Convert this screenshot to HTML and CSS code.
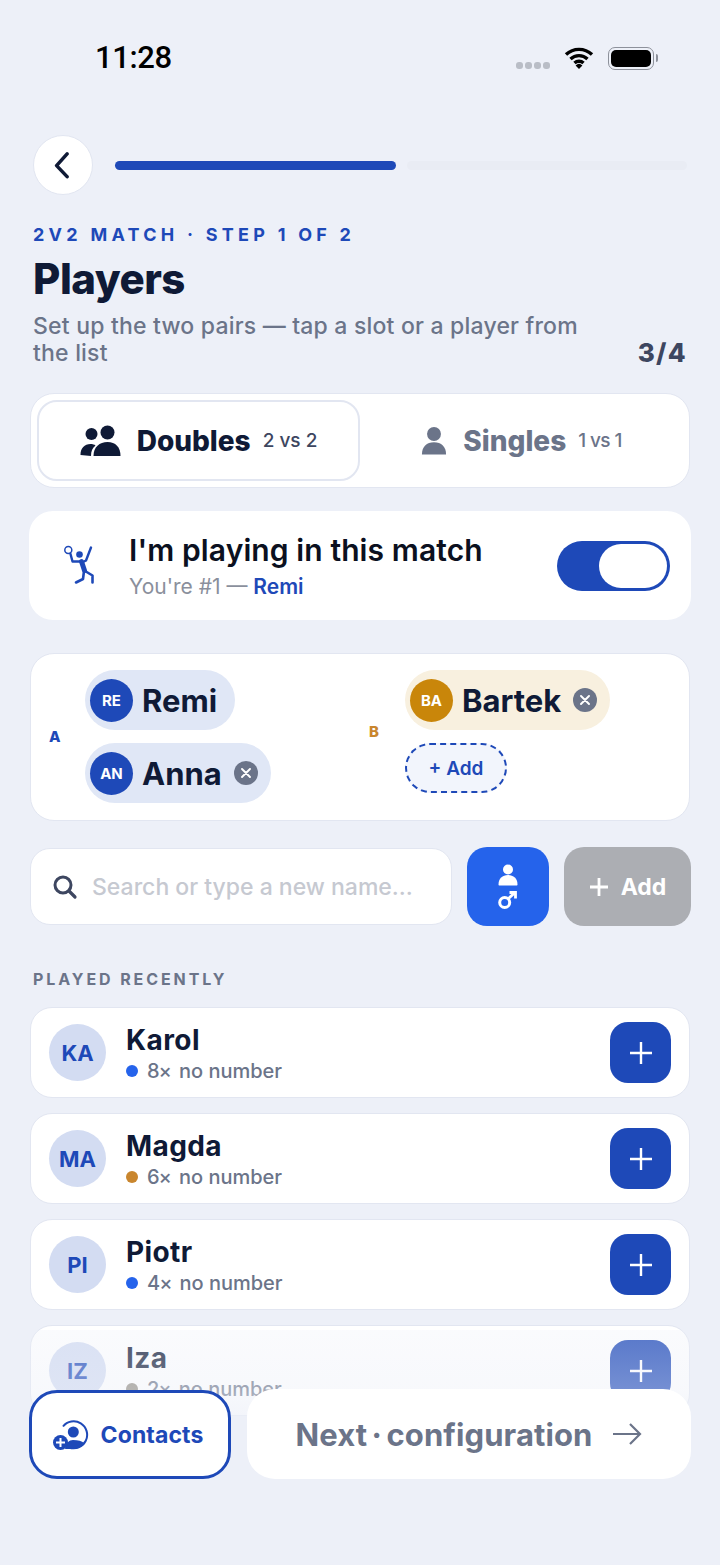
FILE: index.html
```html
<!DOCTYPE html>
<html lang="en">
<head>
    <meta charset="UTF-8">
    <meta name="viewport" content="width=device-width, initial-scale=1.0">
    <title>Players</title>
    <link rel="stylesheet" href="styles.css">
</head>
<body>
    <div class="screen">
        <!-- Status bar -->
        <div class="status-bar">
            <span class="clock">11:28</span>
            <div class="status-icons">
                <div class="signal"><i></i><i></i><i></i><i></i></div>
                <svg class="wifi" viewBox="0 0 30 24" width="30" height="24">
                    <path d="M2 8.500a19 19 0 0 1 26 0M6.500 13a12.500 12.500 0 0 1 17 0M10.500 17a6.500 6.500 0 0 1 9 0" fill="none" stroke="#000" stroke-width="3.400"/>
                    <path d="M15 23l-3.400-3.600a5 5 0 0 1 6.800 0z" fill="#000"/>
                </svg>
                <div class="battery"><div class="battery-level"></div></div>
            </div>
        </div>

        <!-- Back + progress -->
        <div class="topbar">
            <button class="back-btn">
                <svg viewBox="0 0 24 24" width="28" height="28"><path d="M15.500 2.500L6.500 12.500l9 9.500" fill="none" stroke="#0f1a36" stroke-width="3" stroke-linecap="round" stroke-linejoin="round"/></svg>
            </button>
            <div class="progress">
                <div class="progress-seg active"></div>
                <div class="progress-seg"></div>
            </div>
        </div>

        <div class="eyebrow">2V2 MATCH · STEP 1 OF 2</div>
        <h1>Players</h1>
        <div class="intro">
            <p>Set up the two pairs — tap a slot or a player from the list</p>
            <span class="count">3/4</span>
        </div>

        <!-- Match type -->
        <div class="segment">
            <div class="segment-item selected">
                <svg viewBox="0 0 40 32" width="41" height="32" fill="#0f1a36">
                    <circle cx="11" cy="9" r="6"/>
                    <circle cx="27" cy="7.500" r="7"/>
                    <path d="M0 30c0-7 4-11 10-11 2 0 4 .5 5 1.500-3 2.500-4.500 5.500-4.500 10.500z"/>
                    <path d="M13 31c0-9 6-14 14-14s13 5 13 14z"/>
                </svg>
                <span class="segment-label">Doubles</span>
                <span class="segment-hint">2 vs 2</span>
            </div>
            <div class="segment-item">
                <svg viewBox="0 0 28 30" width="26" height="29" fill="#6b7489">
                    <circle cx="14" cy="8" r="7.500"/>
                    <path d="M1 30c0-8 5-13 13-13s13 5 13 13z"/>
                </svg>
                <span class="segment-label">Singles</span>
                <span class="segment-hint">1 vs 1</span>
            </div>
        </div>

        <!-- Playing toggle -->
        <div class="me-card">
            <svg class="me-icon" viewBox="0 0 40 42" width="40" height="42">
                <circle cx="9.300" cy="5" r="3.500" fill="none" stroke="#1e49b8" stroke-width="1.500"/>
                <circle cx="20.500" cy="9.500" r="3.300" fill="#1e49b8"/>
                <g fill="none" stroke="#1e49b8" stroke-linecap="round" stroke-linejoin="round">
                    <path d="M11.500 9l2 7.500h9M32 2.500l-5 13-4 2" stroke-width="2.400"/>
                    <path d="M22.500 16.500l3 9" stroke-width="5"/>
                    <path d="M25 26l-1 8-7 3.500M26 26l7.500 4.500v7" stroke-width="2.600"/>
                </g>
            </svg>
            <div class="me-text">
                <div class="me-title">I'm playing in this match</div>
                <div class="me-sub">You're #1 — <span class="me-name">Remi</span></div>
            </div>
            <div class="toggle"><div class="toggle-knob"></div></div>
        </div>

        <!-- Teams -->
        <div class="teams">
            <div class="team">
                <span class="team-tag tag-a">A</span>
                <div class="team-slots">
                    <div class="chip chip-a">
                        <span class="chip-avatar">RE</span>
                        <span class="chip-name">Remi</span>
                    </div>
                    <div class="chip chip-a">
                        <span class="chip-avatar">AN</span>
                        <span class="chip-name">Anna</span>
                        <span class="chip-remove">
                            <svg viewBox="0 0 10 10" width="10" height="10"><path d="M1 1l8 8M9 1l-8 8" stroke="#fff" stroke-width="1.900" stroke-linecap="round"/></svg>
                        </span>
                    </div>
                </div>
            </div>
            <div class="team">
                <span class="team-tag tag-b">B</span>
                <div class="team-slots">
                    <div class="chip chip-b">
                        <span class="chip-avatar">BA</span>
                        <span class="chip-name">Bartek</span>
                        <span class="chip-remove">
                            <svg viewBox="0 0 10 10" width="10" height="10"><path d="M1 1l8 8M9 1l-8 8" stroke="#fff" stroke-width="1.900" stroke-linecap="round"/></svg>
                        </span>
                    </div>
                    <div class="slot-add">+ Add</div>
                </div>
            </div>
        </div>

        <!-- Search row -->
        <div class="search-row">
            <div class="search">
                <svg viewBox="0 0 26 26" width="26" height="26"><circle cx="11" cy="11" r="8" fill="none" stroke="#3d4660" stroke-width="3"/><path d="M17 17l6 6" stroke="#3d4660" stroke-width="3.200" stroke-linecap="round"/></svg>
                <span class="search-text">Search or type a new name...</span>
            </div>
            <button class="gender-btn">
                <svg viewBox="0 0 30 46" width="30" height="46" fill="#fff">
                    <circle cx="15" cy="5.500" r="5"/>
                    <path d="M5.500 20.500c0-6 4-9.500 9.500-9.500s9.500 3.500 9.500 9.500c0 .6-.4 1-1 1h-17c-.6 0-1-.4-1-1z"/>
                    <circle cx="11.700" cy="38.500" r="5" fill="none" stroke="#fff" stroke-width="3"/>
                    <path d="M15.500 34.500l6-5.500M16.500 28.500h6v6" fill="none" stroke="#fff" stroke-width="2.800"/>
                </svg>
            </button>
            <button class="add-btn">
                <svg viewBox="0 0 20 20" width="20" height="20"><path d="M10 1v18M1 10h18" stroke="#fff" stroke-width="2.800"/></svg>
                Add
            </button>
        </div>

        <div class="section-label">PLAYED RECENTLY</div>

        <div class="player-list">
            <div class="player">
                <span class="player-avatar">KA</span>
                <div class="player-info">
                    <div class="player-name">Karol</div>
                    <div class="player-meta"><i class="dot dot-blue"></i><span class="times">8×</span><span>no number</span></div>
                </div>
                <button class="plus-btn"><svg viewBox="0 0 24 24" width="24" height="24"><path d="M12 1v22M1 12h22" stroke="#fff" stroke-width="2.400"/></svg></button>
            </div>
            <div class="player">
                <span class="player-avatar">MA</span>
                <div class="player-info">
                    <div class="player-name">Magda</div>
                    <div class="player-meta"><i class="dot dot-amber"></i><span class="times">6×</span><span>no number</span></div>
                </div>
                <button class="plus-btn"><svg viewBox="0 0 24 24" width="24" height="24"><path d="M12 1v22M1 12h22" stroke="#fff" stroke-width="2.400"/></svg></button>
            </div>
            <div class="player">
                <span class="player-avatar">PI</span>
                <div class="player-info">
                    <div class="player-name">Piotr</div>
                    <div class="player-meta"><i class="dot dot-blue"></i><span class="times">4×</span><span>no number</span></div>
                </div>
                <button class="plus-btn"><svg viewBox="0 0 24 24" width="24" height="24"><path d="M12 1v22M1 12h22" stroke="#fff" stroke-width="2.400"/></svg></button>
            </div>
            <div class="player">
                <span class="player-avatar">IZ</span>
                <div class="player-info">
                    <div class="player-name">Iza</div>
                    <div class="player-meta"><i class="dot dot-grey"></i><span class="times">2×</span><span>no number</span></div>
                </div>
                <button class="plus-btn"><svg viewBox="0 0 24 24" width="24" height="24"><path d="M12 1v22M1 12h22" stroke="#fff" stroke-width="2.400"/></svg></button>
            </div>
        </div>

        <!-- Sticky footer over the list -->
        <div class="footer">
            <button class="contacts-btn">
                <svg viewBox="0 0 36 32" width="36" height="32">
                    <path d="M10 7.500A13.500 13.500 0 1 1 16 28.500" fill="none" stroke="#1e49b8" stroke-width="2"/>
                    <circle cx="20.300" cy="13" r="5.500" fill="#1e49b8"/>
                    <path d="M12 30c1-6 4-9 8-9 5 0 9 1 11 3-2 4-6 6-11 6z" fill="#1e49b8"/>
                    <circle cx="7.500" cy="23.500" r="7.500" fill="#1e49b8"/>
                    <path d="M7.500 19v9M3 23.500h9" stroke="#fff" stroke-width="2"/>
                </svg>
                Contacts
            </button>
            <button class="next-btn">
                Next · configuration
                <svg viewBox="0 0 30 24" width="30" height="24"><path d="M1 12h27M18 2l10 10-10 10" fill="none" stroke="#6b7489" stroke-width="2.200"/></svg>
            </button>
        </div>
    </div>
</body>
</html>
```
FILE: styles.css
```css
* {
    box-sizing: border-box;
}
body {
    margin: 0;
    font-family: Inter, "Liberation Sans", sans-serif;
    background-color: #edf0f8;
    color: #0f1a36;
}
button {
    font-family: inherit;
    border: none;
    cursor: pointer;
}
h1, p {
    margin: 0;
}
.screen {
    position: relative;
    width: 720px;
    height: 1565px;
    padding: 0 30px;
    overflow: hidden;
}

/* status bar */
.status-bar {
    height: 135px;
    padding: 39px 36px 0 65px;
    display: flex;
    justify-content: space-between;
    align-items: flex-start;
}
.clock {
    font-family: Roboto, sans-serif;
    font-size: 31px;
    line-height: 38px;
    font-weight: 500;
    letter-spacing: -0.4px;
    color: #000;
}
.status-icons {
    display: flex;
    align-items: center;
    gap: 14px;
    height: 38px;
}
.signal {
    display: flex;
    gap: 2px;
    margin-top: 14px;
}
.signal i {
    width: 7px;
    height: 7px;
    border-radius: 3px;
    background-color: #b9bdc6;
}
.battery {
    position: relative;
    width: 46px;
    height: 23px;
    padding: 2px;
    border: 1.5px solid #8d919b;
    border-radius: 7px;
}
.battery::after {
    content: "";
    position: absolute;
    right: -5px;
    top: 6px;
    width: 2px;
    height: 8px;
    border-radius: 0 2px 2px 0;
    background-color: #8d919b;
}
.battery-level {
    height: 100%;
    background-color: #000;
    border-radius: 5px;
}

/* back + progress */
.topbar {
    display: flex;
    align-items: center;
    gap: 22px;
    padding: 0 3px;
    height: 60px;
}
.back-btn {
    flex: none;
    width: 60px;
    height: 60px;
    border-radius: 50%;
    background-color: #fff;
    border: 1px solid #e2e6f1;
    display: flex;
    align-items: center;
    justify-content: center;
    padding: 0;
}
.progress {
    flex: 1;
    display: flex;
    gap: 11px;
}
.progress-seg {
    flex: 1;
    height: 9px;
    border-radius: 5px;
    background-color: #e9ecf4;
}
.progress-seg.active {
    background-color: #1e49b8;
}

.eyebrow {
    margin: 29px 0 0 3px;
    font-size: 18px;
    line-height: 22px;
    font-weight: 700;
    letter-spacing: 4.25px;
    color: #1e49b8;
}
h1 {
    margin: 8px 0 0 3px;
    font-size: 42px;
    line-height: 50px;
    font-weight: 800;
    letter-spacing: -0.5px;
}
.intro {
    margin: 9px 3px 0;
    display: flex;
    justify-content: space-between;
    align-items: flex-end;
}
.intro p {
    width: 570px;
    font-size: 23px;
    line-height: 27px;
    font-weight: 500;
    letter-spacing: 0.2px;
    color: #6b7489;
}
.count {
    font-size: 26px;
    line-height: 28px;
    font-weight: 800;
    letter-spacing: 1.3px;
    color: #3d4660;
}

/* match type */
.segment {
    margin-top: 26px;
    height: 95px;
    padding: 6px;
    display: flex;
    background-color: #fff;
    border: 1px solid #e2e6f1;
    border-radius: 24px;
}
.segment-item {
    flex: 1;
    display: flex;
    align-items: center;
    justify-content: center;
    border: 2px solid transparent;
    border-radius: 20px;
    color: #6b7489;
}
.segment-item.selected {
    border-color: #e2e6f1;
    color: #0f1a36;
}
.segment-label {
    margin-left: 16px;
    font-size: 28px;
    font-weight: 800;
}
.segment-hint {
    margin-left: 12px;
    font-size: 19px;
    font-weight: 500;
    color: #3d4660;
}
.segment-item:not(.selected) .segment-hint {
    letter-spacing: -0.6px;
    color: #6b7489;
}

/* playing toggle */
.me-card {
    margin: 23px -1px 0;
    height: 109px;
    padding: 0 21px 0 30px;
    display: flex;
    align-items: center;
    background-color: #fff;
    border-radius: 24px;
}
.me-icon {
    flex: none;
}
.me-text {
    flex: 1;
    margin-left: 30px;
}
.me-title {
    font-size: 30px;
    line-height: 36px;
    font-weight: 600;
    letter-spacing: 0.1px;
    color: #0b1020;
}
.me-sub {
    margin-top: 6px;
    font-size: 21px;
    line-height: 26px;
    color: #8a8f9c;
}
.me-name {
    font-weight: 600;
    color: #1e49b8;
}
.toggle {
    width: 113px;
    height: 50px;
    padding: 3px;
    display: flex;
    justify-content: flex-end;
    background-color: #1e49b8;
    border-radius: 25px;
}
.toggle-knob {
    width: 68px;
    height: 44px;
    background-color: #fff;
    border-radius: 22px;
}

/* teams */
.teams {
    margin-top: 33px;
    height: 168px;
    padding: 16px 0 0 18px;
    display: flex;
    background-color: #fff;
    border: 1px solid #e2e6f1;
    border-radius: 24px;
}
.team {
    display: flex;
    width: 320px;
    align-items: center;
    align-self: flex-start;
}
.team-tag {
    width: 36px;
    font-size: 15px;
    font-weight: 800;
}
.tag-a {
    color: #1e49b8;
}
.tag-b {
    color: #c9862e;
}
.team-slots {
    display: flex;
    flex-direction: column;
    align-items: flex-start;
    gap: 13px;
}
.chip {
    height: 60px;
    padding: 0 13px 0 5px;
    display: flex;
    align-items: center;
    border-radius: 30px;
}
.chip-a {
    background-color: #e0e7f6;
}
.chip-b {
    background-color: #f8f0df;
}
.chip-avatar {
    width: 43px;
    height: 43px;
    display: flex;
    align-items: center;
    justify-content: center;
    border-radius: 50%;
    font-size: 15px;
    font-weight: 700;
    color: #fff;
    background-color: #1e49b8;
}
.chip-b .chip-avatar {
    background-color: #c9860a;
}
.chip-name {
    margin: 0 12px 0 9px;
    font-size: 31px;
    font-weight: 700;
    color: #0f1a36;
}
.chip-remove {
    width: 24px;
    height: 24px;
    display: flex;
    align-items: center;
    justify-content: center;
    border-radius: 50%;
    background-color: #6b7489;
}
.chip:not(:has(.chip-remove)) .chip-name {
    margin-right: 5px;
}
.slot-add {
    width: 102px;
    height: 50px;
    display: flex;
    align-items: center;
    justify-content: center;
    border: 2.5px dashed #1e49b8;
    border-radius: 25px;
    background-color: #f2f5fc;
    font-size: 19px;
    font-weight: 600;
    color: #1e49b8;
}

/* search row */
.search-row {
    margin-top: 26px;
    display: flex;
    align-items: center;
    gap: 15px;
}
.search {
    width: 422px;
    height: 77px;
    padding: 0 21px;
    display: flex;
    align-items: center;
    gap: 14px;
    background-color: #fff;
    border: 1px solid #e2e6f1;
    border-radius: 20px;
}
.search-text {
    font-size: 23px;
    font-weight: 500;
    color: #c6c9d1;
    white-space: nowrap;
}
.gender-btn {
    width: 82px;
    height: 79px;
    padding: 0;
    border-radius: 20px;
    background-color: #2563eb;
    display: flex;
    align-items: center;
    justify-content: center;
}
.add-btn {
    width: 127px;
    height: 79px;
    padding: 0;
    margin-right: -1px;
    border-radius: 20px;
    background-color: #acaeb3;
    color: #fff;
    font-size: 23px;
    font-weight: 700;
    display: flex;
    align-items: center;
    justify-content: center;
    gap: 12px;
}

.section-label {
    margin: 43px 0 0 3px;
    font-size: 16px;
    line-height: 20px;
    font-weight: 700;
    letter-spacing: 2.9px;
    color: #6b7489;
}

/* player list */
.player-list {
    margin-top: 18px;
    display: flex;
    flex-direction: column;
    gap: 15px;
}
.player {
    height: 91px;
    padding: 0 18px;
    display: flex;
    align-items: center;
    background-color: #fff;
    border: 1px solid #e2e6f1;
    border-radius: 22px;
}
.player-avatar {
    flex: none;
    width: 57px;
    height: 57px;
    display: flex;
    align-items: center;
    justify-content: center;
    border-radius: 50%;
    background-color: #d3dcf2;
    color: #1e49b8;
    font-size: 22px;
    font-weight: 700;
}
.player-info {
    flex: 1;
    margin: 1px 0 0 20px;
}
.player-name {
    font-size: 28px;
    line-height: 32px;
    font-weight: 700;
    letter-spacing: 0.4px;
}
.player-meta {
    margin-top: 3px;
    display: flex;
    align-items: center;
    font-size: 20px;
    line-height: 24px;
    font-weight: 500;
    color: #6b7489;
}
.times {
    letter-spacing: -1px;
    margin-right: 8px;
}
.dot {
    width: 12px;
    height: 12px;
    margin-right: 9px;
    border-radius: 50%;
}
.dot-blue {
    background-color: #2563eb;
}
.dot-amber {
    background-color: #c9862e;
}
.dot-grey {
    background-color: #8f8a80;
}
.plus-btn {
    width: 61px;
    height: 61px;
    padding: 0;
    border-radius: 18px;
    background-color: #1e49b8;
    display: flex;
    align-items: center;
    justify-content: center;
}

/* footer floats over the end of the list */
.footer {
    position: absolute;
    left: 0;
    right: 0;
    bottom: 0;
    height: 235px;
    padding: 0 29px 86px;
    display: flex;
    align-items: flex-end;
    gap: 16px;
    background: linear-gradient(to bottom, rgba(237, 240, 248, 0.27) 0, rgba(237, 240, 248, 0.42) 60px, rgba(237, 240, 248, 0.7) 88px, #edf0f8 100px);
}
.contacts-btn {
    width: 202px;
    height: 89px;
    padding: 0 4px 0 0;
    display: flex;
    align-items: center;
    justify-content: center;
    gap: 12px;
    background-color: #fff;
    border: 3px solid #1e49b8;
    border-radius: 28px;
    color: #1e49b8;
    font-size: 23px;
    font-weight: 700;
    letter-spacing: 0.1px;
}
.next-btn {
    flex: 1;
    height: 90px;
    display: flex;
    align-items: center;
    justify-content: center;
    gap: 20px;
    background-color: #fff;
    border-radius: 28px;
    color: #6b7489;
    font-size: 31px;
    font-weight: 700;
    word-spacing: -3px;
    letter-spacing: 0.1px;
}
```
